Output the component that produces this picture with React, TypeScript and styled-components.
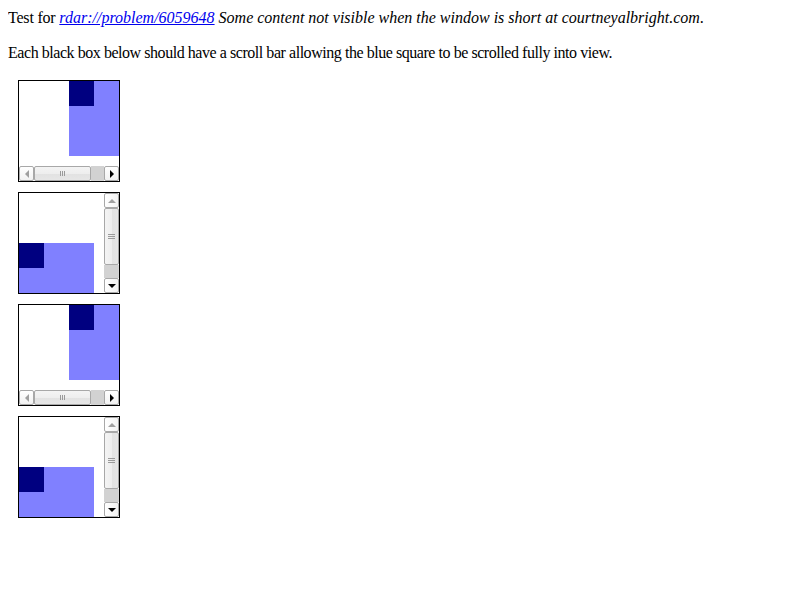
import styled, { createGlobalStyle } from "styled-components";

// page defaults: old serif test page look
const GlobalStyle = createGlobalStyle`
  body {
    margin: 8px;
    font-family: "Liberation Serif", "Times New Roman", serif;
    font-size: 16px;
    line-height: 18px;
    color: #000;
    background: #fff;
  }
`;

// upright text in the reference is set a little tighter than Liberation Serif
const Line = styled.div`
  margin: 1px 0 0;
  letter-spacing: -0.2px;
`;

const Para = styled.p`
  margin: 17px 0 0;
  letter-spacing: -0.45px;
`;

const Note = styled.i`
  letter-spacing: 0;
`;

const Link = styled.a`
  color: #0000ee;
  text-decoration: underline;
`;

const Boxes = styled.div`
  margin-top: 18px;
`;

// the black bordered scroll box
const Box = styled.div<{ $vertical?: boolean }>`
  width: 100px;
  height: 100px;
  border: 1px solid #000;
  margin: 0 0 10px 10px;
  display: flex;
  flex-direction: ${(p) => (p.$vertical ? "row" : "column")};
  background: #fff;
`;

const Viewport = styled.div<{ $vertical?: boolean }>`
  flex: 1;
  display: flex;
  flex-direction: column;
  justify-content: ${(p) => (p.$vertical ? "flex-end" : "flex-start")};
  align-items: ${(p) => (p.$vertical ? "flex-start" : "flex-end")};
  overflow: hidden;
`;

const BlueSquare = styled.div<{ $w: number; $h: number }>`
  width: ${(p) => p.$w}px;
  height: ${(p) => p.$h}px;
  background: #8080ff;
  display: flex;
`;

const DarkCorner = styled.div`
  width: 25px;
  height: 25px;
  background: #000080;
`;

// scroll bar parts
const Bar = styled.div<{ $vertical?: boolean }>`
  display: flex;
  flex-direction: ${(p) => (p.$vertical ? "column" : "row")};
  ${(p) => (p.$vertical ? "width: 15px;" : "height: 15px;")}
  background: #fff;
`;

const ArrowButton = styled.div<{ $vertical?: boolean }>`
  width: 15px;
  height: 15px;
  box-sizing: border-box;
  border: 1px solid #a8a8a8;
  border-radius: 2px;
  background: linear-gradient(${(p) => (p.$vertical ? "90deg" : "180deg")}, #ffffff, #f2f2f2);
  display: flex;
  align-items: center;
  justify-content: center;
  flex: none;
`;

const Arrow = styled.div<{ $dir: "left" | "right" | "up" | "down"; $off?: boolean }>`
  width: 0;
  height: 0;
  ${(p) => {
    const c = p.$off ? "#a0a0a0" : "#000";
    switch (p.$dir) {
      case "left":
        return `border-top: 4px solid transparent; border-bottom: 4px solid transparent; border-right: 4px solid ${c};`;
      case "right":
        return `border-top: 4px solid transparent; border-bottom: 4px solid transparent; border-left: 4px solid ${c};`;
      case "up":
        return `border-left: 4px solid transparent; border-right: 4px solid transparent; border-bottom: 4px solid ${c};`;
      default:
        return `border-left: 4px solid transparent; border-right: 4px solid transparent; border-top: 4px solid ${c};`;
    }
  }}
`;

const Thumb = styled.div<{ $vertical?: boolean }>`
  flex: none;
  ${(p) => (p.$vertical ? "height: 57px; width: 15px;" : "width: 57px; height: 15px;")}
  box-sizing: border-box;
  border: 1px solid #a8a8a8;
  border-radius: 2px;
  background: linear-gradient(
    ${(p) => (p.$vertical ? "90deg" : "180deg")},
    #f4f4f4 0%,
    #eeeeee 50%,
    #e2e2e2 51%,
    #e6e6e6 100%
  );
  display: flex;
  align-items: center;
  justify-content: center;
`;

const Track = styled.div`
  flex: 1;
  background: #d2d2d2;
`;

const Grip = ({ vertical }: { vertical?: boolean }) =>
  vertical ? (
    <svg width="7" height="6" viewBox="0 0 7 6">
      <path d="M0 0.5h7M0 2.5h7M0 4.5h7" stroke="#9a9a9a" strokeWidth="1" />
    </svg>
  ) : (
    <svg width="6" height="5" viewBox="0 0 6 5">
      <path d="M0.5 0v5M2.5 0v5M4.5 0v5" stroke="#9a9a9a" strokeWidth="1" />
    </svg>
  );

const HorizontalBox = () => (
  <Box>
    <Viewport>
      <BlueSquare $w={50} $h={75}>
        <DarkCorner />
      </BlueSquare>
    </Viewport>
    <Bar>
      <ArrowButton>
        <Arrow $dir="left" $off />
      </ArrowButton>
      <Thumb>
        <Grip />
      </Thumb>
      <Track />
      <ArrowButton>
        <Arrow $dir="right" />
      </ArrowButton>
    </Bar>
  </Box>
);

const VerticalBox = () => (
  <Box $vertical>
    <Viewport $vertical>
      <BlueSquare $w={75} $h={50}>
        <DarkCorner />
      </BlueSquare>
    </Viewport>
    <Bar $vertical>
      <ArrowButton $vertical>
        <Arrow $dir="up" $off />
      </ArrowButton>
      <Thumb $vertical>
        <Grip vertical />
      </Thumb>
      <Track />
      <ArrowButton $vertical>
        <Arrow $dir="down" />
      </ArrowButton>
    </Bar>
  </Box>
);

const App = () => (
  <>
    <GlobalStyle />
    <Line>
      Test for{" "}
      <Note>
        <Link href="#">rdar://problem/6059648</Link> Some content not visible
        when the window is short at courtneyalbright.com
      </Note>
      .
    </Line>
    <Para>
      Each black box below should have a scroll bar allowing the blue square to
      be scrolled fully into view.
    </Para>
    <Boxes>
      <HorizontalBox />
      <VerticalBox />
      <HorizontalBox />
      <VerticalBox />
    </Boxes>
  </>
);

export default App;
